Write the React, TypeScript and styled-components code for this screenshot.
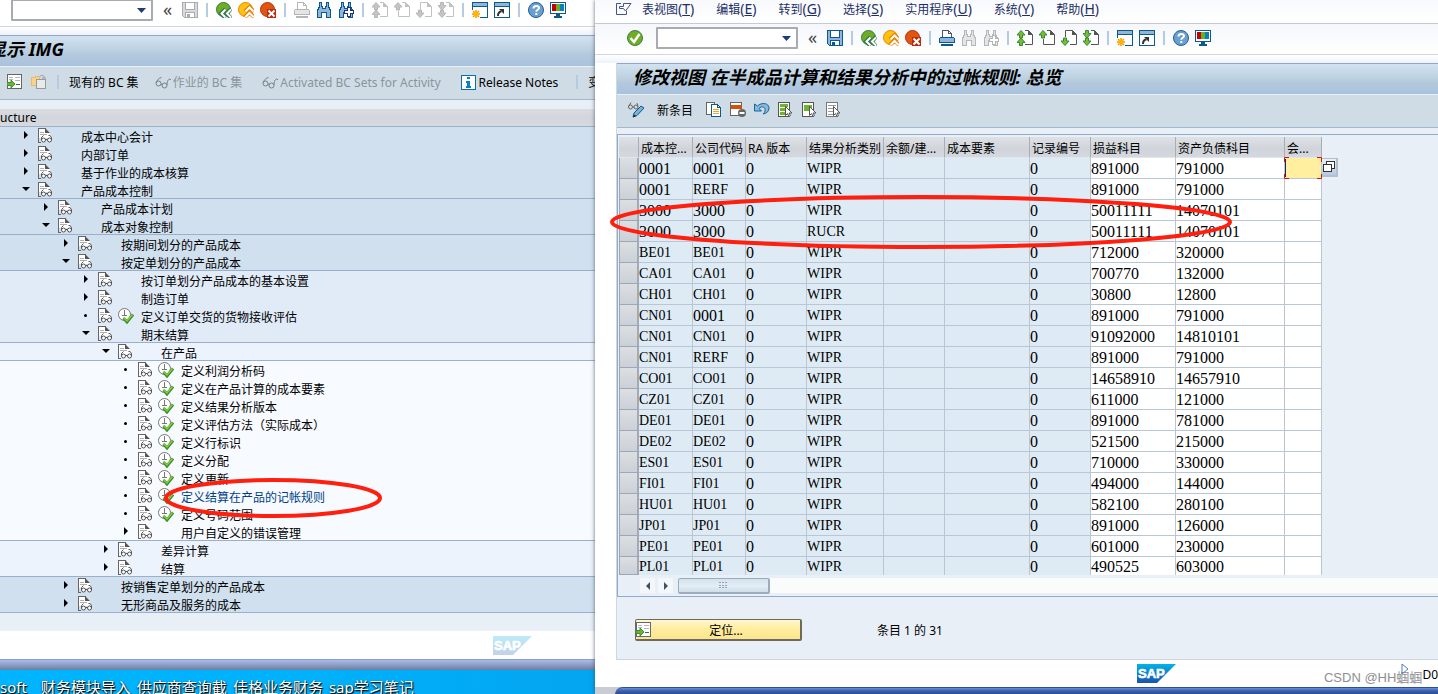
import React from "react";
import styled, { createGlobalStyle } from "styled-components";

const Global = createGlobalStyle`
  * { box-sizing: border-box; }
  body { margin: 0; }
  body, button, input {
    font-family: "Noto Sans", "Noto Sans CJK SC", sans-serif;
    font-size: 12px;
    color: #000;
  }
`;

/* ---------- desktop and windows ---------- */

const Desktop = styled.div`
  display: grid;
  grid-template-columns: minmax(0, 595fr) minmax(0, 843fr);
  min-height: 100vh;
  overflow: hidden;
  background: linear-gradient(90deg, #00b4ff 0%, #00b2fb 20%, #04a4f0 42%);
`;

const LeftSide = styled.div`
  display: flex;
  flex-direction: column;
  min-width: 0;
  overflow: hidden;
`;

const ImgWindow = styled.section`
  position: relative;
  flex: 1;
  display: flex;
  flex-direction: column;
  background: #fff;
  white-space: nowrap;
`;

const ViewWindow = styled.section`
  position: relative;
  display: flex;
  flex-direction: column;
  min-width: 0;
  background: #fff;
  box-shadow: 0 0 4px rgba(60, 70, 90, 0.8);
  white-space: nowrap;
`;

const WindowEdge = styled.div`
  height: 11px;
  border-top: 1px solid #8d9cc8;
  background: linear-gradient(#a9bbe6, #95a7d3 35%, #6f7d9f);
`;

const DesktopLabels = styled.div`
  display: flex;
  gap: 6px;
  height: 24px;
  padding-top: 5px;
  overflow: hidden;
  font-size: 15px;
  line-height: 24px;
  color: #fff;
  text-shadow: 1px 1px 1px #000, 0 1px 2px #123;
`;

const FirstLabel = styled.span`
  margin-right: 8px;
`;

/* ---------- bars ---------- */

const MenuBar = styled.nav`
  display: flex;
  align-items: center;
  gap: 22px;
  height: 24px;
  padding: 0 0 4px 21px;
  border-bottom: 1px solid #c5cad6;
  background: linear-gradient(#f8f9fc, #fff);
`;

const MenuIcon = styled.span`
  display: flex;
  width: 16px;
  margin-right: -12px;
`;

const MenuItem = styled.button`
  padding: 0;
  border: 0;
  background: none;
  color: #1c2f66;
  line-height: 20px;
`;

const Accel = styled.span`
  font-size: 14px;
`;

const StandardBar = styled.div<{ $cut?: boolean }>`
  display: flex;
  align-items: center;
  gap: 6px;
  height: ${(p) => (p.$cut ? 27 : 31)}px;
  padding: ${(p) => (p.$cut ? "0 0 6px 11px" : "0 0 2px 32px")};
  border-bottom: 1px solid #d3d6e2;
  background: ${(p) => (p.$cut ? "#fff" : "linear-gradient(#f5f7fb, #fff)")};
`;

const Spacer = styled.div<{ $h: number; $soft?: boolean }>`
  flex: none;
  height: ${(p) => p.$h}px;
  background: ${(p) => (p.$soft ? "linear-gradient(#fff, #eef2f8)" : "#e8eff7")};
`;

const Combo = styled.div`
  display: flex;
  align-items: center;
  width: 142px;
  height: 22px;
  margin-right: 2px;
  padding-right: 5px;
  border: 2px solid #a9abb3;
  border-radius: 1px;
  background: #fff;
  input {
    flex: 1;
    min-width: 0;
    height: 16px;
    border: 0;
    outline: 0;
    background: none;
  }
`;

const OkSlot = styled.span`
  display: flex;
  margin-right: 7px;
`;

const Guillemet = styled.button`
  width: 13px;
  margin-right: 2px;
  padding: 0 0 2px;
  border: 0;
  background: none;
  color: #444;
  font-size: 18px;
  line-height: 18px;
`;

const IconButton = styled.button`
  flex: none;
  display: flex;
  width: 16px;
  height: 16px;
  padding: 0;
  border: 0;
  background: none;
`;

const Sep = styled.span`
  flex: none;
  width: 2px;
  height: 14px;
  margin: 0 2px;
  background: #b4cbe3;
`;

const TitleBar = styled.h1<{ $cut?: boolean }>`
  height: 32px;
  margin: 0;
  padding: ${(p) => (p.$cut ? "0" : "0 0 0 16px")};
  border-top: 1px solid #93a6c4;
  border-bottom: 1px solid #e8f1f9;
  background: linear-gradient(#d2e2f1, #b9cedd 55%, #b3c9de 60%, #a9c2dd);
  font-size: 18px;
  font-weight: 700;
  font-style: italic;
  line-height: 26px;
`;

const ClippedTitle = styled.span`
  margin-left: -12px;
`;

const AppBar = styled.div<{ $left: number }>`
  display: flex;
  align-items: center;
  gap: 8px;
  height: 33px;
  padding: 0 0 2px ${(p) => p.$left}px;
  overflow: hidden;
  border-bottom: 1px solid #a3b8cc;
  background: #cfdce6;
`;

const AppButton = styled.button<{ $off?: boolean; $before?: number; $after?: number }>`
  flex: none;
  display: flex;
  align-items: center;
  gap: 2px;
  margin-left: ${(p) => p.$before ?? 0}px;
  margin-right: ${(p) => p.$after ?? 0}px;
  padding: 2px 0 0;
  border: 0;
  background: none;
  color: ${(p) => (p.$off ? "#8b949b" : "#000")};
  line-height: 20px;
`;

/* ---------- tree ---------- */

const TreeHead = styled.div`
  height: 18px;
  border-bottom: 1px solid #9bafc8;
  background: linear-gradient(#d9dde0, #d2d6dc 50%, #d6d9dd);
  line-height: 17px;
`;

const Tree = styled.ul`
  margin: 0;
  padding: 0;
  list-style: none;
`;

const Branch = styled.li<{ $tone: string }>`
  border-bottom: 1px solid #9ab0ca;
  background: ${(p) => p.$tone};
`;

const Node = styled.div<{ $level: number; $last?: boolean }>`
  display: flex;
  align-items: center;
  height: ${(p) => (p.$last ? 17 : 18)}px;
  padding-left: ${(p) => 20 + p.$level * 20}px;
`;

const Marker = styled.span`
  display: flex;
  width: 18px;
  padding-bottom: 2px;
`;

const DocSlot = styled.span`
  display: flex;
  width: 20px;
`;

const RunSlot = styled.span`
  display: flex;
  width: 23px;
`;

const NodeLabel = styled.a<{ $active?: boolean }>`
  color: ${(p) => (p.$active ? "#003f8a" : "#000")};
  text-decoration: none;
  line-height: 18px;
  padding-top: 4px;
`;

const LogoStrip = styled.div`
  display: flex;
  justify-content: flex-end;
  align-items: center;
  height: 28px;
  padding-right: 63px;
  background: #fff;
`;

const Ring = styled.svg`
  position: absolute;
  overflow: visible;
  pointer-events: none;
`;

const TreeRing = styled(Ring)`
  left: 164px;
  top: 479px;
`;

const TableRing = styled(Ring)`
  left: 15px;
  top: 195px;
`;

/* ---------- right window body ---------- */

const Body = styled.div`
  flex: 1;
  display: flex;
  flex-direction: column;
  margin-left: 21px;
  border-left: 1px solid #cdd8e4;
  border-bottom: 1px solid #cfd6dd;
  background: #e8eff7;
`;

const TableFrame = styled.div`
  margin-top: 6px;
  padding: 2px 0 3px 1px;
  border: 1px solid #8fabc9;
  border-right: 0;
`;

const Grid = styled.table`
  width: 703px;
  table-layout: fixed;
  border-collapse: separate;
  border-spacing: 0;
`;

const HeadCell = styled.th`
  height: 21px;
  padding: 3px 0 0 2px;
  border-right: 1px solid #a7adb9;
  border-bottom: 1px solid #dfe6ee;
  background: linear-gradient(#dfe1e4, #d0d4da 60%, #d5d9df);
  font-weight: 400;
  line-height: 17px;
  text-align: left;
`;

const Cell = styled.td<{ $edit?: boolean; $code?: boolean; $short?: boolean }>`
  height: ${(p) => (p.$short ? 18 : 21)}px;
  padding: 0;
  border-right: 1px solid #b9c6d5;
  border-bottom: ${(p) => (p.$short ? "0" : "1px solid #b9c6d5")};
  background: ${(p) => (p.$edit ? "#fff" : "#deebf5")};
  font-family: "Liberation Serif", serif;
  font-size: ${(p) => (p.$code ? 14 : 16)}px;
  line-height: 17px;
`;

const Selector = styled.td<{ $short?: boolean }>`
  height: ${(p) => (p.$short ? 18 : 21)}px;
  padding: 0;
  border: 1px solid #9fa7b3;
  border-top: 0;
  border-right: 2px solid #a3a9b6;
  background: linear-gradient(#dcdfe2, #cbd0d8);
`;

const FocusCell = styled.td`
  position: relative;
  padding: 0;
  border-right: 1px solid #b9c6d5;
  border-bottom: 1px solid #b9c6d5;
  background: #ffef9f;
  input {
    display: block;
    width: 36px;
    height: 18px;
    padding: 0;
    border: 0;
    border-left: 1px solid #1a2a5c;
    outline: 0;
    background: transparent;
  }
`;

const Corners = styled.svg`
  position: absolute;
  left: -2px;
  top: -2px;
  pointer-events: none;
`;

const HelpButton = styled.button`
  position: absolute;
  left: 37px;
  top: 0;
  display: flex;
  align-items: center;
  justify-content: center;
  width: 16px;
  height: 19px;
  padding: 0;
  border: 1px solid #b3bfcd;
  border-width: 1px 2px 2px 0;
  background: linear-gradient(#e9f0f8, #b4c9e4);
`;

const ScrollRow = styled.div`
  display: flex;
  gap: 3px;
  height: 15px;
  margin: 3px 0 0 21px;
`;

const ScrollArrow = styled.button`
  display: flex;
  align-items: center;
  justify-content: center;
  width: 15px;
  height: 15px;
  padding: 0;
  border: 0;
  background: #f3f6fb;
`;

const Track = styled.div`
  flex: 1;
  margin-left: 2px;
  background: #fafbfb;
`;

const Thumb = styled.div`
  display: flex;
  align-items: center;
  justify-content: center;
  width: 92px;
  height: 16px;
  border: 1px solid #9aacbd;
  border-width: 1px 2px 2px 1px;
  border-radius: 2px;
  background: linear-gradient(#d5e2ed, #e3edf5 55%, #cfdeea);
`;

const FooterRow = styled.div`
  display: flex;
  align-items: center;
  gap: 75px;
  padding: 22px 0 0 18px;
`;

const LocateButton = styled.button`
  display: flex;
  align-items: center;
  width: 167px;
  height: 22px;
  padding: 0;
  border: 1px solid #6e6a5c;
  border-width: 1px 2px 2px 1px;
  border-radius: 2px;
  background: linear-gradient(#fff6cf, #ffeea0 45%, #fbe58d);
  span {
    flex: 1;
    text-align: center;
  }
`;

const StatusBar = styled.footer`
  display: flex;
  align-items: center;
  justify-content: flex-end;
  height: 27px;
`;

const Watermark = styled.span`
  position: relative;
  margin-left: 148px;
  color: #8c8e92;
  font-family: "Liberation Sans", "Noto Sans CJK SC", sans-serif;
  font-size: 13px;
  line-height: 20px;
  padding-top: 8px;
`;

const PlayMark = styled.svg`
  position: absolute;
  right: 13px;
  top: 3px;
`;

const System = styled.span`
  padding-top: 2px;
`;

const Underlay = styled.div`
  height: 7px;
  background: #c9ccd2;
  &::before {
    content: "";
    display: block;
    height: 7px;
    margin-left: 20px;
    border-top: 1px solid #2c4f9c;
    border-radius: 14px 0 0 0;
    background: linear-gradient(#6b92db, #3c5fae 40%, #26478c);
  }
`;

/* ---------- icons ---------- */

type Tint = { on?: boolean };

const Svg = ({ w = 16, h = 16, crisp = false, children }: { w?: number; h?: number; crisp?: boolean; children: React.ReactNode }) => (
  <svg width={w} height={h} viewBox={`0 0 ${w} ${h}`} fill="none" shapeRendering={crisp ? "crispEdges" : "auto"} aria-hidden="true">
    {children}
  </svg>
);

const SaveIcon = ({ on }: Tint) => {
  const c = on ? "#0b5a8c" : "#a9abad";
  return (
    <Svg crisp>
      <path d="M.5.5h15v15h-13l-2-2z" fill={on ? "#8fb5dd" : "#d9dadb"} stroke={c} />
      <path d="M3.500.5h9v7h-9z" fill="#fff" stroke={c} />
      <path d="M3.500 10.500h9v5h-9z" fill="#fff" stroke={c} />
      <path d="M5 12h3v3H5z" fill={c} />
    </Svg>
  );
};

const Ball = ({ fill, edge, kind }: { fill: string; edge: string; kind: "back" | "up" | "stop" }) => (
  <Svg>
    <circle cx="7.500" cy="7.500" r="7" fill={fill} stroke={edge} />
    {kind === "back" && (
      <>
        <path d="M9.500 7L5 11.500 9.500 16M15 7l-4.500 4.500L15 16" stroke={edge} strokeWidth="4" />
        <path d="M9.500 7.500l-4 4 4 4M15 7.500l-4 4 4 4" stroke="#fff" strokeWidth="2" />
      </>
    )}
    {kind === "up" && (
      <>
        <path d="M7 9.500L11.500 5 16 9.500M7 15l4.500-4.500L16 15" stroke={edge} strokeWidth="4" />
        <path d="M7.500 9.500l4-4 4 4M7.500 15l4-4 4 4" stroke="#fff" strokeWidth="2" />
      </>
    )}
    {kind === "stop" && (
      <>
        <path d="M7 7h9v9H7z" fill={edge} />
        <path d="M8.500 8.500l6 6M14.500 8.500l-6 6" stroke="#fff" strokeWidth="2" />
      </>
    )}
  </Svg>
);

const OkIcon = () => (
  <Svg>
    <circle cx="8" cy="8" r="7.500" fill="#6fae22" stroke="#3c7d4a" />
    <path d="M3.500 8l3.500 4 5.500-8" stroke="#fff" strokeWidth="2.500" />
  </Svg>
);

const PrintIcon = ({ on }: Tint) => {
  const c = on ? "#0b5a8c" : "#b4b6b8";
  const paper = on ? "#555" : "#b4b6b8";
  return (
    <Svg crisp>
      <path d="M3.500 7V.5h6l3 3V7" fill="#fff" stroke={paper} />
      <path d="M9.500.5v3h3" stroke={paper} />
      <path d="M1 7h14v1h1v5H0V8h1z" fill={c} />
      <path d="M1 8h14v4H1z" fill={on ? "#8fb5dd" : "#e4e5e6"} />
      <path d="M2 14h12v2H2z" fill={c} />
    </Svg>
  );
};

const FindIcon = ({ on, plus }: Tint & { plus?: boolean }) => {
  const c = on ? "#0b5a8c" : "#b4b6b8";
  const f = on ? "#8fb5dd" : "#e4e5e6";
  return (
    <Svg crisp>
      <path d="M3.500.5h2v4h1v2h3v-2h1v-4h2v4l2 4v7h-4v-5h-5v5h-4v-7l2-4z" fill={f} stroke={c} />
      {plus && (
        <>
          <path d="M9 5h4v3h3v4h-3v3H9v-3H6V8h3z" fill={on ? "#1c2f80" : "#b4b6b8"} />
          <path d="M10 6h2v3h3v2h-3v3h-2v-3H7V9h3z" fill="#fff" />
        </>
      )}
    </Svg>
  );
};

const pageOutline = {
  first: "M8 .5h3.500l4 4v10H8",
  prev: "M8 .5h3.500l4 4v10h-11V9",
  next: "M4.500 7V.5h7l4 4v10H9",
  last: "M8 .5h3.500l4 4v10H8",
};

const PageIcon = ({ on, kind }: Tint & { kind: keyof typeof pageOutline }) => {
  const fill = on ? "#7cbc2c" : "#c3c5c7";
  const edge = on ? "#2f8a3b" : "#b4b6b8";
  const paper = on ? "#555" : "#bfc1c3";
  const up = (y: number) => <path key={y} d={`M4 ${y}l4 4.500H5.500v3h-3v-3H0z`} fill={fill} stroke={edge} />;
  const down = (y: number) => <path key={y} d={`M4 ${y + 7.5}l4-4.500H5.500v-3h-3v3H0z`} fill={fill} stroke={edge} />;
  return (
    <Svg>
      <path d={pageOutline[kind]} fill="#fff" stroke={paper} />
      <path d="M11 0v5h5z" fill={paper} />
      {kind === "first" && [up(8), up(0.5)]}
      {kind === "prev" && up(0.5)}
      {kind === "next" && down(8)}
      {kind === "last" && [down(0.5), down(8)]}
    </Svg>
  );
};

const WindowIcon = ({ star }: { star?: boolean }) => (
  <Svg crisp>
    <path d="M.5.5h15v15H.5z" fill="#fff" stroke="#0b5a8c" />
    <path d="M1 1h14v3H1z" fill="#8fb5dd" />
    <path d="M0 4h16v1H0z" fill="#0b5a8c" />
    {star ? (
      <g shapeRendering="auto">
        <path d="M0 8h8v8H0z" fill="#fff" />
        <path d="M4 8v8M0 12h8M1 9l6 6M7 9l-6 6" stroke="#f39a00" strokeWidth="1.500" />
        <circle cx="4" cy="12" r="2.500" fill="#ffb400" />
      </g>
    ) : (
      <g shapeRendering="auto">
        <path d="M4 14c0-3 1-4.500 3.500-4.500" stroke="#333" strokeWidth="2" />
        <path d="M5 7h5v5z" fill="#333" />
      </g>
    )}
  </Svg>
);

const QuestionIcon = () => (
  <Svg>
    <circle cx="8" cy="8" r="7.500" fill="#6a9fd0" stroke="#1f6091" />
    <path d="M5.500 6.500c0-3.500 5.500-3.300 5.500-.5 0 1.800-2.700 1.700-2.700 3.700M8.300 11v2" stroke="#fff" strokeWidth="2" />
  </Svg>
);

const MonitorIcon = () => (
  <Svg crisp>
    <path d="M0 0h16v12H0z" fill="#0b5a8c" />
    <path d="M1 1h14v10H1z" fill="#fff" />
    <path d="M2 2h4v7H2z" fill="#c40000" />
    <path d="M6 2h4v7H6z" fill="#6fae22" />
    <path d="M10 2h4v7h-4z" fill="#0a7fc2" />
    <path d="M6 12h4v2h2v2H4v-2h2z" fill="#0b5a8c" />
  </Svg>
);

const Glasses = () => (
  <Svg>
    <circle cx="3.500" cy="8.500" r="2.500" stroke="#777f86" />
    <circle cx="9.500" cy="10.500" r="2.500" stroke="#777f86" />
    <path d="M1 8c1-3 3-5 5.500-5.500M12 10c0-3 1-6 3-6l1 1M6 9l1.500.8" stroke="#777f86" />
  </Svg>
);

const GlassesPencil = () => (
  <Svg>
    <circle cx="2.500" cy="5" r="2" stroke="#666" />
    <circle cx="8" cy="5" r="2" stroke="#666" />
    <path d="M.5 4.500L3 .5M10 4.500L9 1M4.500 5H6" stroke="#666" />
    <path d="M5 15l1-4 7-7 3 2-7 7.500z" fill="#7fb0d8" stroke="#0b5a8c" />
    <path d="M5 15.500l1-3 2 1.500z" fill="#222" />
  </Svg>
);

const PositionIcon = () => (
  <Svg crisp>
    <path d="M.5.5h14v14H.5z" fill="#fff" stroke="#666" />
    <path d="M2 3h4v1H2zM8 3h5v1H8zM2 5h4v1H2zM8 6h5v1H8z" fill="#b5b5b5" />
    <path d="M9 10h4v1H9z" fill="#1f7a44" />
    <path d="M0 8.500h4V6l4 4-4 4v-2.500H0z" fill="#6fb52a" stroke="#3f8d3b" shapeRendering="auto" />
  </Svg>
);

const CopyFolder = () => (
  <Svg crisp>
    <path d="M.5 3.500h4v-1h4v9h-8z" fill="#f8d48a" stroke="#eab96a" />
    <path d="M5.500 5.500h9v9h-9z" fill="#e6eaed" stroke="#9a9a9a" />
    <path d="M9 2.500c2-2 4-1 4.500 1M11 4h4" stroke="#9a9a9a" shapeRendering="auto" />
  </Svg>
);

const InfoIcon = () => (
  <Svg crisp>
    <path d="M.5.5h14v14H.5z" fill="#fff" stroke="#0b6fae" />
    <path d="M6 2h3v2H6zM5 6h4v5h1v2H5v-2h1V8H5z" fill="#0b7fc2" />
  </Svg>
);

const CopyIcon = () => (
  <Svg crisp>
    <path d="M.5.500h8v12h-8z" fill="#fff" stroke="#666" />
    <path d="M5.500 2.500h6l3 3v9h-9z" fill="#fff" stroke="#0b5a8c" />
    <path d="M11.500 2.500v3h3" stroke="#0b5a8c" />
    <path d="M7 7h6v1H7zM7 9h6v1H7zM7 11h6v1H7z" fill="#e3a92c" />
  </Svg>
);

const DeleteIcon = () => (
  <Svg>
    <g shapeRendering="crispEdges">
      <path d="M.5.5h11v13H.5z" fill="#fff" stroke="#666" />
      <path d="M1 3h11v4H1z" fill="#d4500f" />
      <path d="M1 8h11v2H1z" fill="#fff" />
    </g>
    <circle cx="12" cy="11" r="4" fill="#666" />
    <path d="M9.500 11h5" stroke="#fff" strokeWidth="2" />
  </Svg>
);

const UndoIcon = () => (
  <Svg>
    <path d="M.5 2v7h7L5 6.500c3-3 7-1.500 6 2.500-.3 1.500-1 2-2 3 4-.5 6-3 6-6 0-5-7.500-6-11.500-2z" fill="#8fb5dd" stroke="#0b6a9c" />
  </Svg>
);

const SelectIcon = ({ kind }: { kind: "all" | "block" | "none" }) => (
  <Svg>
    <g shapeRendering="crispEdges">
      <path d="M.5.5h11v14H.5z" fill="#fff" stroke={kind === "none" ? "#777" : "#555"} />
      {kind === "all" && <path d="M2 2h8v3H2zM2 6h8v3H2zM2 10h8v3H2z" fill="#6fb52a" />}
      {kind === "block" && <path d="M2 3h8v6H2z" fill="#6fb52a" />}
      {kind === "none" && <path d="M2 3h8v1H2zM2 6h8v1H2zM2 9h6v1H2zM2 12h6v1H2z" fill="#999" />}
    </g>
    <path d="M7.500 4.500v9l2-2 1.500 3 1.500-1-1.500-2.500h3z" fill="#fff" stroke="#555" />
  </Svg>
);

const ExitMenuIcon = () => (
  <Svg>
    <path d="M5 1.500H.5v11h10V9" stroke="#43548a" />
    <path d="M3.500 4.500h4v-3h7.500L9.500 9l-2-2.500h-4z" fill="#fff" stroke="#43548a" />
  </Svg>
);

const DocIcon = () => (
  <Svg w={15} h={16}>
    <path d="M1 1h7l4 4v5H1z" fill="#fff" />
    <path d="M.5 15V.5H8M.5 14.500H3" stroke="#666" shapeRendering="crispEdges" />
    <path d="M7 0l5 5H7z" fill="#555" />
    <path d="M2 4h4v1H2zM2 6h7v1H2z" fill="#b0b0b0" shapeRendering="crispEdges" />
    <circle cx="5.500" cy="12" r="2" fill="#fff" stroke="#555" />
    <circle cx="11.500" cy="12" r="2" fill="#fff" stroke="#555" />
    <path d="M3.500 12V9.500L5.500 7.500M13.500 12V9.500L12 7.500H10.500M7.500 11.500h2" stroke="#555" />
  </Svg>
);

const RunIcon = () => (
  <Svg>
    <circle cx="6.500" cy="6.500" r="6" fill="#fff" stroke="#777" />
    <path d="M6.500 2v5M4 7.500h5" stroke="#777" />
    <path d="M5.500 10l3.500 4L15 6.500" stroke="#3c8f33" strokeWidth="3" />
    <path d="M5.500 9.500l3.500 3.500 5.500-6.500" stroke="#86cf3c" strokeWidth="1.500" />
  </Svg>
);

const Triangle = ({ kind }: { kind: "open" | "closed" | "leaf" }) => (
  <Svg w={10} h={10}>
    {kind === "closed" && <path d="M4 1l4 4-4 4z" fill="#000" />}
    {kind === "open" && <path d="M2 3h8L6 7z" fill="#000" />}
    {kind === "leaf" && <circle cx="5.500" cy="5.500" r="1.500" fill="#000" />}
  </Svg>
);

const DownArrow = () => (
  <Svg w={9} h={5}>
    <path d="M0 0h9L4.500 5z" fill="#1f3a78" />
  </Svg>
);

const SapLogo = ({ faded }: { faded?: boolean }) => (
  <svg width="39" height="19" viewBox="0 0 39 19" opacity={faded ? 0.26 : 1} role="img" aria-label="SAP">
    <defs>
      <linearGradient id="sap" x1="0" y1="0" x2="0" y2="1">
        <stop offset="0" stopColor="#00b3ea" />
        <stop offset="1" stopColor="#1a52ae" />
      </linearGradient>
    </defs>
    <path d="M0 0h39L20 19H0z" fill="url(#sap)" />
    <text x="1" y="14" fill="#fff" stroke="#fff" strokeWidth="0.600" fontFamily="Liberation Sans, sans-serif" fontWeight="700" fontSize="13">
      SAP
    </text>
  </svg>
);

/* ---------- shared parts ---------- */

const StandardIcons = ({ active }: { active: boolean }) => (
  <>
    <Combo>
      <input aria-label="命令" />
      <DownArrow />
    </Combo>
    <Guillemet aria-label="收起">«</Guillemet>
    <IconButton aria-label="保存"><SaveIcon on={active} /></IconButton>
    <Sep />
    <IconButton aria-label="返回"><Ball kind="back" fill="#6fae22" edge="#35794a" /></IconButton>
    <IconButton aria-label="退出"><Ball kind="up" fill="#ffc20e" edge="#e98300" /></IconButton>
    <IconButton aria-label="取消"><Ball kind="stop" fill="#e0560f" edge="#bb2a0c" /></IconButton>
    <Sep />
    <IconButton aria-label="打印"><PrintIcon on={active} /></IconButton>
    <IconButton aria-label="查找"><FindIcon on={!active} /></IconButton>
    <IconButton aria-label="继续查找"><FindIcon on={!active} plus /></IconButton>
    <Sep />
    <IconButton aria-label="首页"><PageIcon on={active} kind="first" /></IconButton>
    <IconButton aria-label="上一页"><PageIcon on={active} kind="prev" /></IconButton>
    <IconButton aria-label="下一页"><PageIcon on={active} kind="next" /></IconButton>
    <IconButton aria-label="末页"><PageIcon on={active} kind="last" /></IconButton>
    <Sep />
    <IconButton aria-label="新建会话"><WindowIcon star /></IconButton>
    <IconButton aria-label="快捷方式"><WindowIcon /></IconButton>
    <Sep />
    <IconButton aria-label="帮助"><QuestionIcon /></IconButton>
    <IconButton aria-label="布局"><MonitorIcon /></IconButton>
  </>
);

type NodeData = { level: number; kind: "open" | "closed" | "leaf"; text: string; run?: boolean; active?: boolean };

const leaf = (text: string, active = false): NodeData => ({ level: 5, kind: "leaf", text, run: true, active });

const branches: { tone: string; nodes: NodeData[] }[] = [
  {
    tone: "#d1e0ef",
    nodes: [
      { level: 0, kind: "closed", text: "成本中心会计" },
      { level: 0, kind: "closed", text: "内部订单" },
      { level: 0, kind: "closed", text: "基于作业的成本核算" },
      { level: 0, kind: "open", text: "产品成本控制" },
    ],
  },
  {
    tone: "#d1e0ef",
    nodes: [
      { level: 1, kind: "closed", text: "产品成本计划" },
      { level: 1, kind: "open", text: "成本对象控制" },
    ],
  },
  {
    tone: "#d1e0ef",
    nodes: [
      { level: 2, kind: "closed", text: "按期间划分的产品成本" },
      { level: 2, kind: "open", text: "按定单划分的产品成本" },
    ],
  },
  {
    tone: "#e1ebf8",
    nodes: [
      { level: 3, kind: "closed", text: "按订单划分产品成本的基本设置" },
      { level: 3, kind: "closed", text: "制造订单" },
      { level: 3, kind: "leaf", text: "定义订单交货的货物接收评估", run: true },
      { level: 3, kind: "open", text: "期末结算" },
    ],
  },
  { tone: "#ecf3fc", nodes: [{ level: 4, kind: "open", text: "在产品" }] },
  {
    tone: "#f7faff",
    nodes: [
      leaf("定义利润分析码"),
      leaf("定义在产品计算的成本要素"),
      leaf("定义结果分析版本"),
      leaf("定义评估方法（实际成本）"),
      leaf("定义行标识"),
      leaf("定义分配"),
      leaf("定义更新"),
      leaf("定义结算在产品的记帐规则", true),
      leaf("定义号码范围"),
      { level: 5, kind: "closed", text: "用户自定义的错误管理" },
    ],
  },
  {
    tone: "#ecf3fc",
    nodes: [
      { level: 4, kind: "closed", text: "差异计算" },
      { level: 4, kind: "closed", text: "结算" },
    ],
  },
  {
    tone: "#d1e0ef",
    nodes: [
      { level: 2, kind: "closed", text: "按销售定单划分的产品成本" },
      { level: 2, kind: "closed", text: "无形商品及服务的成本" },
    ],
  },
];

const menus: [string, string][] = [
  ["表视图", "T"],
  ["编辑", "E"],
  ["转到", "G"],
  ["选择", "S"],
  ["实用程序", "U"],
  ["系统", "Y"],
  ["帮助", "H"],
];

const columnWidths = [20, 54, 53, 61, 77, 61, 85, 61, 85, 109, 37];
const headings = ["成本控...", "公司代码", "RA 版本", "结果分析类别", "余额/建...", "成本要素", "记录编号", "损益科目", "资产负债科目", "会..."];

const rules: [string, string, string, string, string][] = [
  ["0001", "0001", "WIPR", "891000", "791000"],
  ["0001", "RERF", "WIPR", "891000", "791000"],
  ["3000", "3000", "WIPR", "50011111", "14070101"],
  ["3000", "3000", "RUCR", "50011111", "14070101"],
  ["BE01", "BE01", "WIPR", "712000", "320000"],
  ["CA01", "CA01", "WIPR", "700770", "132000"],
  ["CH01", "CH01", "WIPR", "30800", "12800"],
  ["CN01", "0001", "WIPR", "891000", "791000"],
  ["CN01", "CN01", "WIPR", "91092000", "14810101"],
  ["CN01", "RERF", "WIPR", "891000", "791000"],
  ["CO01", "CO01", "WIPR", "14658910", "14657910"],
  ["CZ01", "CZ01", "WIPR", "611000", "121000"],
  ["DE01", "DE01", "WIPR", "891000", "781000"],
  ["DE02", "DE02", "WIPR", "521500", "215000"],
  ["ES01", "ES01", "WIPR", "710000", "330000"],
  ["FI01", "FI01", "WIPR", "494000", "144000"],
  ["HU01", "HU01", "WIPR", "582100", "280100"],
  ["JP01", "JP01", "WIPR", "891000", "126000"],
  ["PE01", "PE01", "WIPR", "601000", "230000"],
  ["PL01", "PL01", "WIPR", "490525", "603000"],
];

const RuleRow = ({ row, first, last }: { row: (typeof rules)[number]; first: boolean; last: boolean }) => {
  const [area, company, category, profit, balance] = row;
  const locked = [area, company, "0", category, "", "", "0"];
  return (
    <tr>
      <Selector $short={last} />
      {locked.map((text, i) => (
        <Cell key={i} $code={/[A-Z]/.test(text)} $short={last}>{text}</Cell>
      ))}
      <Cell $edit $short={last}>{profit}</Cell>
      <Cell $edit $short={last}>{balance}</Cell>
      {first ? (
        <FocusCell>
          <input aria-label="会计" />
          <Corners width="40" height="25" viewBox="0 0 40 25" fill="none" aria-hidden="true">
            <path d="M1.500 6V1.500H6M34 1.500h4.500V6M1.500 18v4.500H6M34 22.500h4.500V18" stroke="#e01010" />
          </Corners>
          <HelpButton aria-label="输入帮助">
            <Svg w={12} h={12} crisp>
              <path d="M3.500.5h8v7h-8z" fill="#fff" stroke="#333" />
              <path d="M.5 3.500h8v7h-8z" fill="#fff" stroke="#333" />
            </Svg>
          </HelpButton>
        </FocusCell>
      ) : (
        <Cell $edit $short={last} />
      )}
    </tr>
  );
};

export default function App() {
  return (
    <>
      <Global />
      <Desktop>
        <LeftSide>
          <ImgWindow>
            <StandardBar $cut>
              <StandardIcons active={false} />
            </StandardBar>
            <Spacer $h={8} $soft />
            <TitleBar $cut>
              <ClippedTitle>显示 IMG</ClippedTitle>
            </TitleBar>
            <AppBar $left={7}>
              <IconButton aria-label="定位"><PositionIcon /></IconButton>
              <IconButton aria-label="复制"><CopyFolder /></IconButton>
              <Sep />
              <AppButton>现有的 BC 集</AppButton>
              <AppButton $off $before={8}><Glasses />作业的 BC 集</AppButton>
              <AppButton $off $before={12}><Glasses />Activated BC Sets for Activity</AppButton>
              <AppButton $before={12} $after={8}><InfoIcon />Release Notes</AppButton>
              <Sep />
              <AppButton>变</AppButton>
            </AppBar>
            <Spacer $h={9} />
            <TreeHead>ucture</TreeHead>
            <Tree>
              {branches.map((b, i) => (
                <Branch key={i} $tone={b.tone}>
                  {b.nodes.map((n, j) => (
                    <Node key={n.text} $level={n.level} $last={j === b.nodes.length - 1}>
                      <Marker><Triangle kind={n.kind} /></Marker>
                      <DocSlot><DocIcon /></DocSlot>
                      <RunSlot>{n.run && <RunIcon />}</RunSlot>
                      <NodeLabel href="#" $active={n.active}>{n.text}</NodeLabel>
                    </Node>
                  ))}
                </Branch>
              ))}
            </Tree>
            <Spacer $h={18} />
            <LogoStrip><SapLogo faded /></LogoStrip>
            <WindowEdge />
            <TreeRing width="218" height="39" viewBox="0 0 218 39" fill="none" aria-hidden="true">
              <ellipse cx="109" cy="19" rx="107" ry="18" stroke="#ff1f0f" strokeWidth="4" />
            </TreeRing>
          </ImgWindow>
          <DesktopLabels>
            <FirstLabel>soft</FirstLabel>
            <span>财务模块导入</span>
            <span>供应商查询截</span>
            <span>佳格业务财务</span>
            <span>sap学习笔记</span>
          </DesktopLabels>
        </LeftSide>

        <ViewWindow>
          <MenuBar>
            <MenuIcon><ExitMenuIcon /></MenuIcon>
            {menus.map(([name, key]) => (
              <MenuItem key={key}>{name}<Accel>(<u>{key}</u>)</Accel></MenuItem>
            ))}
          </MenuBar>
          <StandardBar>
            <OkSlot><IconButton aria-label="确认"><OkIcon /></IconButton></OkSlot>
            <StandardIcons active />
          </StandardBar>
          <Spacer $h={8} $soft />
          <Body>
            <TitleBar>修改视图 在半成品计算和结果分析中的过帐规则: 总览</TitleBar>
            <AppBar $left={11}>
              <IconButton aria-label="显示/更改"><GlassesPencil /></IconButton>
              <AppButton $before={5} $after={5}>新条目</AppButton>
              <IconButton aria-label="复制为"><CopyIcon /></IconButton>
              <IconButton aria-label="删除"><DeleteIcon /></IconButton>
              <IconButton aria-label="撤消"><UndoIcon /></IconButton>
              <IconButton aria-label="全选"><SelectIcon kind="all" /></IconButton>
              <IconButton aria-label="选择块"><SelectIcon kind="block" /></IconButton>
              <IconButton aria-label="取消全选"><SelectIcon kind="none" /></IconButton>
            </AppBar>
            <TableFrame>
              <Grid>
                <colgroup>
                  {columnWidths.map((w, i) => <col key={i} width={w} />)}
                </colgroup>
                <thead>
                  <tr>
                    <HeadCell />
                    {headings.map((h) => <HeadCell key={h}>{h}</HeadCell>)}
                  </tr>
                </thead>
                <tbody>
                  {rules.map((r, i) => (
                    <RuleRow key={i} row={r} first={i === 0} last={i === rules.length - 1} />
                  ))}
                </tbody>
              </Grid>
              <ScrollRow>
                <ScrollArrow aria-label="向左">
                  <Svg w={6} h={10}><path d="M5 1v8L1 5z" fill="#3f5266" /></Svg>
                </ScrollArrow>
                <ScrollArrow aria-label="向右">
                  <Svg w={6} h={10}><path d="M1 1v8l4-4z" fill="#3f5266" /></Svg>
                </ScrollArrow>
                <Track>
                  <Thumb>
                    <Svg w={9} h={7} crisp>
                      <path d="M0 0h2v1H0zM3 0h2v1H3zM6 0h2v1H6zM0 3h2v1H0zM3 3h2v1H3zM6 3h2v1H6zM0 5h2v1H0zM3 5h2v1H3zM6 5h2v1H6z" fill="#93a5b5" />
                    </Svg>
                  </Thumb>
                </Track>
              </ScrollRow>
            </TableFrame>
            <FooterRow>
              <LocateButton><PositionIcon /><span>定位...</span></LocateButton>
              <span>条目 1 的 31</span>
            </FooterRow>
          </Body>
          <StatusBar>
            <SapLogo />
            <Watermark>
              CSDN @HH蝈蝈
              <PlayMark width="8" height="12" viewBox="0 0 8 12" fill="none" aria-hidden="true">
                <path d="M1 1v10l6-5z" stroke="#4a7fc0" />
              </PlayMark>
            </Watermark>
            <System>D0</System>
          </StatusBar>
          <Underlay />
          <TableRing width="622" height="54" viewBox="0 0 622 54" fill="none" aria-hidden="true">
            <ellipse cx="311" cy="27" rx="309" ry="25" stroke="#ff1f0f" strokeWidth="4" />
          </TableRing>
        </ViewWindow>
      </Desktop>
    </>
  );
}
